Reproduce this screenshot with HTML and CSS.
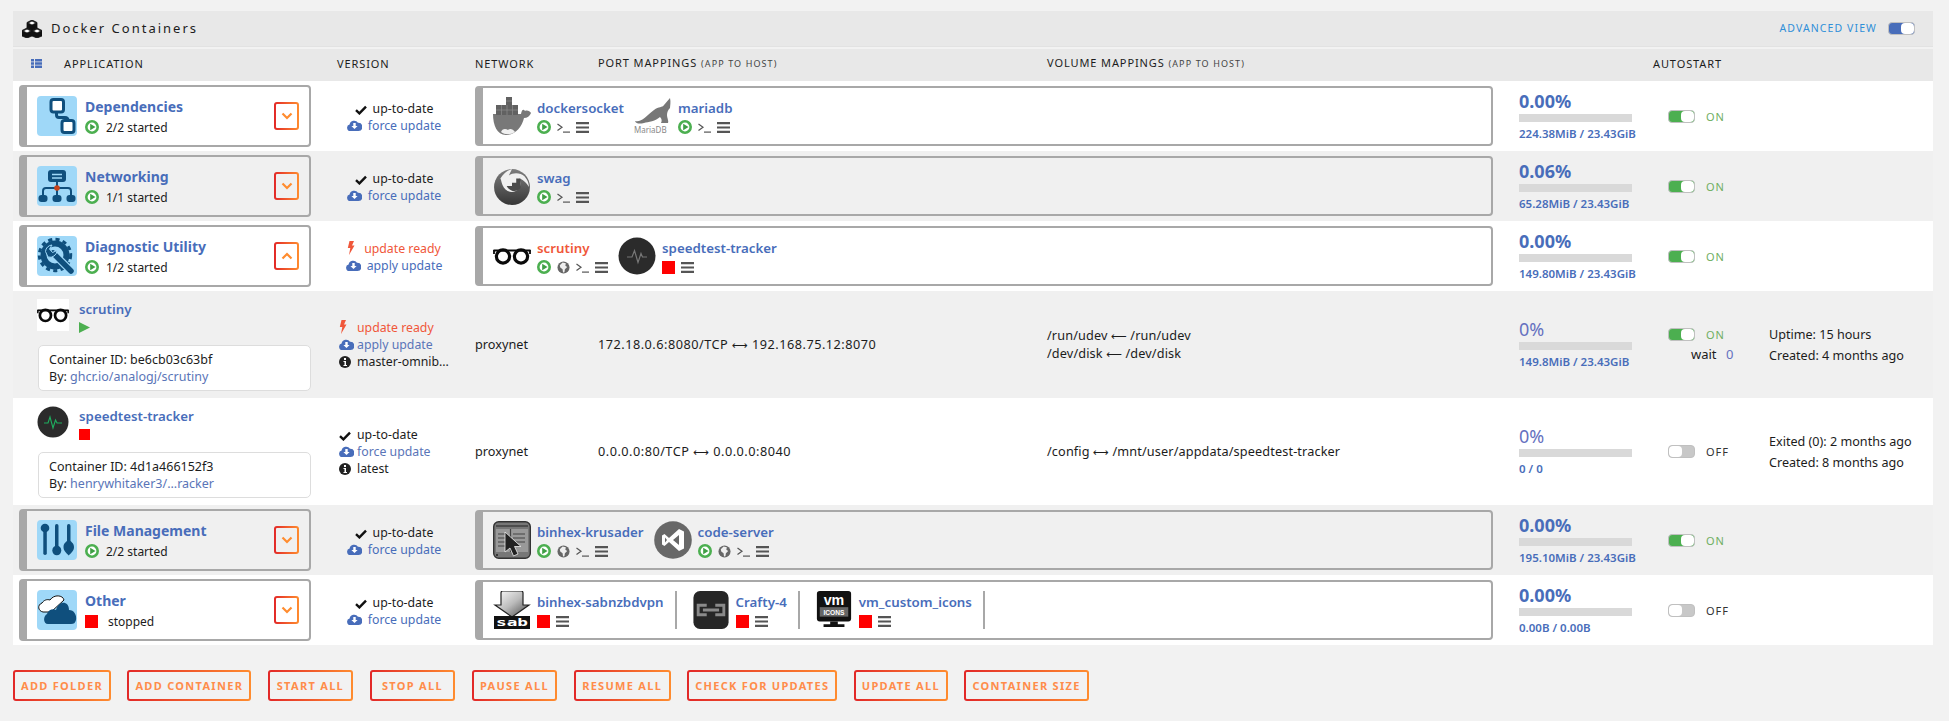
FILE: index.html
```html
<!DOCTYPE html>
<html lang="en">
<head>
<meta charset="utf-8">
<title>Docker Containers</title>
<link rel="stylesheet" href="styles.css">
</head>
<body>
<svg class="defs" width="0" height="0" aria-hidden="true">
  <symbol id="i-play" viewBox="0 0 14 14"><circle cx="7" cy="7" r="5.700" fill="#fff" stroke="#4caf50" stroke-width="2.600"/><path d="M5.200 3.800 10.500 7 5.200 10.200Z" fill="#3f9f45"/></symbol>
  <symbol id="i-globe" viewBox="0 0 14 14"><circle cx="7" cy="7" r="6.500" fill="#666"/><path d="M6 1.500 9.500 2.500 9 5 11 6.500 8.500 9 8 12 6.500 12.500 6 9 3.500 7 3 4.500Z" fill="#eee"/></symbol>
  <symbol id="i-menu" viewBox="0 0 13 12"><path d="M0 .5h13v2.200H0zM0 4.900h13v2.200H0zM0 9.300h13v2.200H0z" fill="#555"/></symbol>
  <symbol id="i-term" viewBox="0 0 13 12"><path d="M.5 2.500 5 5.800.5 9" fill="none" stroke="#555" stroke-width="1.200"/><path d="M6 10h7v1.200H6z" fill="#555"/></symbol>
  <symbol id="i-check" viewBox="0 0 12 10"><path d="M1 5.200 4.400 8.400 11 1.600" fill="none" stroke="#111" stroke-width="2.400"/></symbol>
  <symbol id="i-cloud" viewBox="0 0 15 13"><path d="M3.500 12A3.300 3.300 0 0 1 2.600 5.500 4.600 4.600 0 0 1 11 3.800 4.100 4.100 0 0 1 11.500 12Z" fill="#486dba"/><path d="M6.300 4h2.400v3h1.900L7.500 10 4.400 7h1.900Z" fill="#fff"/></symbol>
  <symbol id="i-bolt" viewBox="0 0 8 14"><path d="M2.500 0H7L5 4.500H7.500L2 14 3.300 7H.8Z" fill="#f0573a"/></symbol>
  <symbol id="i-info" viewBox="0 0 12 12"><circle cx="6" cy="6" r="6" fill="#222"/><path d="M5 2h2v2H5zM4.500 5h2.500v4H8v1H4.500V9h1V6h-1z" fill="#fff"/></symbol>
  <symbol id="i-docker" viewBox="0 0 38 38"><path d="M0 17H28C28.500 14 30 11 32 14 34 13 37 14 38 16 37 19 34 21 31 21 29 30 22 38 13 38 4 38 0 28 0 17Z" fill="#787878"/><path d="M3 8h22v10H3ZM13 0h6v8h-6Z" fill="#616161"/><path d="M3 13h22M8.500 8v10M14 8v10M19.500 8v10M13 4h6" stroke="#8c8c8c" stroke-width=".7" fill="none"/><path d="M8 35C10 31 13 32 15 33 17 31 20 32 22 35 17 38 12 38 8 35Z" fill="#f0f0f0"/></symbol>
  <symbol id="i-swag" viewBox="0 0 36 36"><defs><linearGradient id="g-swag" x1="0" y1="0" x2="0" y2="1"><stop offset="0" stop-color="#7d7d7d"/><stop offset="1" stop-color="#363636"/></linearGradient></defs><circle cx="18" cy="19" r="17" fill="url(#g-swag)"/><path d="M7 11C10 6 14 3 18 2L15 8C19 5 26 5 30 9 33 13 34 15 34 19 31 14 28 12 25 11 27 16 26 21 21 23 16 25 11 22 9 17 8 15 8 13 7 11Z" fill="#f0f0f0"/><path d="M13 18h5v-3h4v-4h4v9c-3 4-10 4-13-2Z" fill="#4a4a4a"/></symbol>
  <symbol id="i-glasses" viewBox="0 0 38 38"><g fill="none" stroke="#0a0a0a"><circle cx="10" cy="19.500" r="6.600" stroke-width="3.200"/><circle cx="28" cy="19.500" r="6.600" stroke-width="3.200"/><path d="M.5 13.500H37.500" stroke-width="2.200"/><path d="M1 13v4M37 13v4" stroke-width="1.800"/></g></symbol>
  <symbol id="i-speed-grey" viewBox="0 0 38 38"><circle cx="19" cy="19" r="18.500" fill="#2b2b2b"/><path d="M9 20h5l2.500-6.500 3.500 12 3-9 1.500 3.500H29" fill="none" stroke="#777" stroke-width="1.200"/></symbol>
  <symbol id="i-speed-green" viewBox="0 0 32 32"><circle cx="16" cy="16" r="15.500" fill="#2b2b2b"/><path d="M7 17h4l2-6 3 11 2.500-8 1.500 3h5" fill="none" stroke="#1fae5f" stroke-width="1.100"/></symbol>
  <symbol id="i-krusader" viewBox="0 0 38 38"><rect x=".7" y=".7" width="36.600" height="36.600" rx="5" fill="#777" stroke="#333" stroke-width="1.400"/><path d="M3 5h32" stroke="#333" stroke-width="1.200"/><rect x="3" y="8" width="32" height="23" fill="#999"/><path d="M17.500 8v23M5 13h9M5 17h9M5 21h9M5 25h9M20 13h12M20 17h12M20 21h12" stroke="#444" stroke-width="1.200"/><path d="M3 34h2" stroke="#222" stroke-width="1.500"/><path d="M12 11V31L17 27 20.500 35 25 33 21.500 25.500H28Z" fill="#222" stroke="#eee" stroke-width=".8"/></symbol>
  <symbol id="i-vscode" viewBox="0 0 38 38"><circle cx="19" cy="19" r="18.800" fill="#686868"/><path d="M25 8 15 17 10.500 13 8 14.500V23.500L10.500 25 15 21 25 30 30 27.500V10.500ZM11 16.500 13 19 11 21.500ZM25 14V24L19 19Z" fill="#fff"/></symbol>
  <symbol id="i-crafty" viewBox="0 0 37 40"><rect width="37" height="40" rx="7" fill="#262626"/><path d="M14 15H5v10h9M23 15h9v10h-9M10 20h17" fill="none" stroke="#8a8a8a" stroke-width="3"/></symbol>
  <symbol id="f-flow" viewBox="0 0 40 40"><rect width="40" height="40" rx="4" fill="#9fd8f8"/><path d="M19.500 16v3q0 2.500 2.500 2.500h6q3 0 3 3" fill="none" stroke="#0f4f7d" stroke-width="3"/><rect x="14" y="3.500" width="12.500" height="12.500" rx="2.500" fill="#fff" stroke="#0f4f7d" stroke-width="3"/><rect x="25" y="24.500" width="12" height="12" rx="2.500" fill="#fff" stroke="#0f4f7d" stroke-width="3"/></symbol>
  <symbol id="f-net" viewBox="0 0 40 40"><rect width="40" height="40" rx="4" fill="#9fd8f8"/><rect x="11" y="4" width="18" height="12" rx="3" fill="#0f4f7d"/><path d="M15 8.500h10M15 12h10" stroke="#9fd8f8" stroke-width="1.500"/><path d="M20 16v14M6 30v-5q0-3 3-3h22q3 0 3 3v5" fill="none" stroke="#0f4f7d" stroke-width="2"/><circle cx="20" cy="22" r="2.800" fill="#c9431b"/><rect x="1.500" y="29" width="9" height="7" rx="3" fill="#0f4f7d"/><rect x="15.500" y="29" width="9" height="7" rx="3" fill="#0f4f7d"/><rect x="29.500" y="29" width="9" height="7" rx="3" fill="#0f4f7d"/></symbol>
  <symbol id="f-gear" viewBox="0 0 40 40"><rect width="40" height="40" rx="4" fill="#9fd8f8"/><circle cx="18" cy="19" r="15.700" fill="none" stroke="#0f4f7d" stroke-width="3" stroke-dasharray="4.100 3.300"/><circle cx="18" cy="19" r="11.500" fill="none" stroke="#0f4f7d" stroke-width="6"/><path d="M16 17 34 35" stroke="#9fd8f8" stroke-width="8"/><path d="M16 17 34 35" stroke="#0f4f7d" stroke-width="5.500" stroke-linecap="round"/><path d="M8.500 15.500A7 7 0 0 1 15 9L12.500 13 15.500 16.500 20 14.500A7 7 0 0 1 11 21Z" fill="#0f4f7d" stroke="#9fd8f8"/></symbol>
  <symbol id="f-tools" viewBox="0 0 40 40"><rect width="40" height="40" rx="4" fill="#9fd8f8"/><g fill="#0f4f7d"><circle cx="8" cy="8" r="4.300"/><rect x="6.300" y="8" width="3.500" height="27" rx="1.700"/><rect x="18" y="4" width="3.500" height="26" rx="1.700"/><ellipse cx="19.800" cy="30.500" rx="4.500" ry="4.800"/><rect x="30" y="4" width="3.500" height="22" rx="1.700"/><path d="M26.500 27C26.500 23 30 21 31.700 20 33.500 21 37 23 37 27 37 31 34 33 31.700 35.500 29.500 33 26.500 31 26.500 27Z"/></g></symbol>
  <symbol id="f-cloud" viewBox="0 0 40 40"><rect width="40" height="40" rx="4" fill="#9fd8f8"/><path d="M6 22C1 21 0 15 5 13 7 10 10 9 13 10 17 4 26 5 27 10L14 22Z" fill="#fff" stroke="#111" stroke-width="1"/><path d="M11 34C6 34 6 26 10 24 11 20 16 18 19 20 22 10 32 11 32 20 37 20 40 25 39 30 38 33 37 34 34 34Z" fill="#0f4f7d"/></symbol>
  <symbol id="i-down" viewBox="0 0 12 8"><path d="M1.500 1.500 6 6l4.500-4.500" fill="none" stroke="#ff8c2f" stroke-width="2.200"/></symbol>
  <symbol id="i-up" viewBox="0 0 12 8"><path d="M1.500 6.500 6 2l4.500 4.500" fill="none" stroke="#ff8c2f" stroke-width="2.200"/></symbol>
</svg>

<main class="panel">
  <header class="titlebar">
    <svg class="title-icon" viewBox="0 0 20 18" width="20" height="18"><g stroke="#111" stroke-width=".8"><path d="M10 0 15 2.500V8L10 10.500 5 8V2.500Z" fill="#111"/><path d="M5 8 10 10.500V16L5 18 0 16V10.500Z" fill="#111"/><path d="M15 8 20 10.500V16L15 18 10 16V10.500Z" fill="#111"/><path d="M10 1 14 3 10 5 6 3ZM5 9 9 11 5 13 1 11ZM15 9 19 11 15 13 11 11Z" fill="#fff"/></g></svg>
    <h1 class="title">Docker Containers</h1>
    <span class="spacer"></span>
    <span class="adv-label">ADVANCED VIEW</span>
    <span class="toggle toggle-blue"><i></i></span>
  </header>

  <div class="row head-row">
    <div class="col-app head-app">
      <svg class="list-icon" viewBox="0 0 11 9" width="11" height="9"><path d="M0 0h3v2.500H0zM4 0h7v2.500H4zM0 3.250h3v2.500H0zM4 3.250h7v2.500H4zM0 6.500h3V9H0zM4 6.500h7V9H4z" fill="#486dba"/></svg>
      <span>APPLICATION</span>
    </div>
    <div class="head-version">VERSION</div>
    <div>NETWORK</div>
    <div>PORT MAPPINGS <small>(APP TO HOST)</small></div>
    <div>VOLUME MAPPINGS <small>(APP TO HOST)</small></div>
    <div class="head-auto">AUTOSTART</div>
  </div>

  <section class="row group white">
    <div class="app-box">
      <svg class="folder-icon"><use href="#f-flow"/></svg>
      <div class="app-text"><a class="app-name">Dependencies</a><div class="app-status"><svg class="ic14"><use href="#i-play"/></svg><span>2/2 started</span></div></div>
      <button class="chev" aria-label="expand"><svg class="chev-ic"><use href="#i-down"/></svg></button>
    </div>
    <div class="ver-c"><div><svg class="ic-check"><use href="#i-check"/></svg>up-to-date</div><div class="blue"><svg class="ic-cloud"><use href="#i-cloud"/></svg>force update</div></div>
    <div class="net-box">
      <div class="item"><svg class="item-icon"><use href="#i-docker"/></svg><div><a class="item-name">dockersocket</a><div class="ctrls"><svg class="ic14"><use href="#i-play"/></svg><svg class="ic13"><use href="#i-term"/></svg><svg class="ic13"><use href="#i-menu"/></svg></div></div></div>
      <div class="item"><svg class="item-icon" viewBox="0 0 38 38"><path d="M1 24C7 26 12 19 20 13 25 9 28 11 30 8L36 1C37 5 36 9 36 11 34 13 33 15 33 18 33 21 35 24 34 26H27C28 24 28 22 26 20 22 24 14 25 10 26 6 27 2 27 1 24Z" fill="#777"/><text class="maria-text" x="0" y="35.500">MariaDB</text></svg><div><a class="item-name">mariadb</a><div class="ctrls"><svg class="ic14"><use href="#i-play"/></svg><svg class="ic13"><use href="#i-term"/></svg><svg class="ic13"><use href="#i-menu"/></svg></div></div></div>
    </div>
    <div class="cpu"><div class="pct">0.00%</div><div class="bar"></div><div class="mem">224.38MiB / 23.43GiB</div></div>
    <div class="auto"><span class="toggle toggle-green"><i></i></span><span class="on">ON</span></div>
  </section>

  <section class="row group grey">
    <div class="app-box">
      <svg class="folder-icon"><use href="#f-net"/></svg>
      <div class="app-text"><a class="app-name">Networking</a><div class="app-status"><svg class="ic14"><use href="#i-play"/></svg><span>1/1 started</span></div></div>
      <button class="chev" aria-label="expand"><svg class="chev-ic"><use href="#i-down"/></svg></button>
    </div>
    <div class="ver-c"><div><svg class="ic-check"><use href="#i-check"/></svg>up-to-date</div><div class="blue"><svg class="ic-cloud"><use href="#i-cloud"/></svg>force update</div></div>
    <div class="net-box">
      <div class="item"><svg class="item-icon"><use href="#i-swag"/></svg><div><a class="item-name">swag</a><div class="ctrls"><svg class="ic14"><use href="#i-play"/></svg><svg class="ic13"><use href="#i-term"/></svg><svg class="ic13"><use href="#i-menu"/></svg></div></div></div>
    </div>
    <div class="cpu"><div class="pct">0.06%</div><div class="bar"></div><div class="mem">65.28MiB / 23.43GiB</div></div>
    <div class="auto"><span class="toggle toggle-green"><i></i></span><span class="on">ON</span></div>
  </section>

  <section class="row group white">
    <div class="app-box">
      <svg class="folder-icon"><use href="#f-gear"/></svg>
      <div class="app-text"><a class="app-name">Diagnostic Utility</a><div class="app-status"><svg class="ic14"><use href="#i-play"/></svg><span>1/2 started</span></div></div>
      <button class="chev" aria-label="collapse"><svg class="chev-ic"><use href="#i-up"/></svg></button>
    </div>
    <div class="ver-c"><div class="orange"><svg class="ic-bolt"><use href="#i-bolt"/></svg>update ready</div><div class="blue"><svg class="ic-cloud"><use href="#i-cloud"/></svg>apply update</div></div>
    <div class="net-box">
      <div class="item"><svg class="item-icon"><use href="#i-glasses"/></svg><div><a class="item-name orange">scrutiny</a><div class="ctrls"><svg class="ic14"><use href="#i-play"/></svg><svg class="ic13"><use href="#i-globe"/></svg><svg class="ic13"><use href="#i-term"/></svg><svg class="ic13"><use href="#i-menu"/></svg></div></div></div>
      <div class="item"><svg class="item-icon"><use href="#i-speed-grey"/></svg><div><a class="item-name">speedtest-tracker</a><div class="ctrls"><span class="stop"></span><svg class="ic13"><use href="#i-menu"/></svg></div></div></div>
    </div>
    <div class="cpu"><div class="pct">0.00%</div><div class="bar"></div><div class="mem">149.80MiB / 23.43GiB</div></div>
    <div class="auto"><span class="toggle toggle-green"><i></i></span><span class="on">ON</span></div>
  </section>

  <section class="row detail grey">
    <div class="d-app">
      <div class="d-top"><svg class="d-icon d-white"><use href="#i-glasses"/></svg><div><a class="item-name">scrutiny</a><svg class="d-state" viewBox="0 0 11 11"><path d="M0 0 11 5.500 0 11Z" fill="#4caf50"/></svg></div></div>
      <div class="info">Container ID: be6cb03c63bf<br>By: <a class="blue-l">ghcr.io/analogj/scrutiny</a></div>
    </div>
    <div class="ver-l"><div class="orange"><span class="vic"><svg class="ic-bolt"><use href="#i-bolt"/></svg></span>update ready</div><div class="blue-l"><span class="vic"><svg class="ic-cloud"><use href="#i-cloud"/></svg></span>apply update</div><div><span class="vic"><svg class="ic-info"><use href="#i-info"/></svg></span>master-omnib...</div></div>
    <div class="cell">proxynet</div>
    <div class="cell ports">172.18.0.6:8080/TCP <span class="arrow">⟷</span> 192.168.75.12:8070</div>
    <div class="cell vols"><div>/run/udev <span class="arrow">⟵</span> /run/udev</div><div>/dev/disk <span class="arrow">⟵</span> /dev/disk</div></div>
    <div class="cpu"><div class="pct-thin">0%</div><div class="bar"></div><div class="mem">149.8MiB / 23.43GiB</div></div>
    <div class="auto-col"><div class="auto"><span class="toggle toggle-green"><i></i></span><span class="on">ON</span></div><div class="wait">wait <b>0</b></div></div>
    <div class="meta">Uptime: 15 hours<br>Created: 4 months ago</div>
  </section>

  <section class="row detail white">
    <div class="d-app">
      <div class="d-top"><svg class="d-icon"><use href="#i-speed-green"/></svg><div><a class="item-name">speedtest-tracker</a><span class="d-stop"></span></div></div>
      <div class="info">Container ID: 4d1a466152f3<br>By: <a class="blue-l">henrywhitaker3/...racker</a></div>
    </div>
    <div class="ver-l"><div><span class="vic"><svg class="ic-check"><use href="#i-check"/></svg></span>up-to-date</div><div class="blue-l"><span class="vic"><svg class="ic-cloud"><use href="#i-cloud"/></svg></span>force update</div><div><span class="vic"><svg class="ic-info"><use href="#i-info"/></svg></span>latest</div></div>
    <div class="cell">proxynet</div>
    <div class="cell ports">0.0.0.0:80/TCP <span class="arrow">⟷</span> 0.0.0.0:8040</div>
    <div class="cell vols">/config <span class="arrow">⟷</span> /mnt/user/appdata/speedtest-tracker</div>
    <div class="cpu"><div class="pct-thin">0%</div><div class="bar"></div><div class="mem">0 / 0</div></div>
    <div class="auto"><span class="toggle toggle-off"><i></i></span><span class="off">OFF</span></div>
    <div class="meta">Exited (0): 2 months ago<br>Created: 8 months ago</div>
  </section>

  <section class="row group grey">
    <div class="app-box">
      <svg class="folder-icon"><use href="#f-tools"/></svg>
      <div class="app-text"><a class="app-name">File Management</a><div class="app-status"><svg class="ic14"><use href="#i-play"/></svg><span>2/2 started</span></div></div>
      <button class="chev" aria-label="expand"><svg class="chev-ic"><use href="#i-down"/></svg></button>
    </div>
    <div class="ver-c"><div><svg class="ic-check"><use href="#i-check"/></svg>up-to-date</div><div class="blue"><svg class="ic-cloud"><use href="#i-cloud"/></svg>force update</div></div>
    <div class="net-box">
      <div class="item"><svg class="item-icon"><use href="#i-krusader"/></svg><div><a class="item-name">binhex-krusader</a><div class="ctrls"><svg class="ic14"><use href="#i-play"/></svg><svg class="ic13"><use href="#i-globe"/></svg><svg class="ic13"><use href="#i-term"/></svg><svg class="ic13"><use href="#i-menu"/></svg></div></div></div>
      <div class="item"><svg class="item-icon"><use href="#i-vscode"/></svg><div><a class="item-name">code-server</a><div class="ctrls"><svg class="ic14"><use href="#i-play"/></svg><svg class="ic13"><use href="#i-globe"/></svg><svg class="ic13"><use href="#i-term"/></svg><svg class="ic13"><use href="#i-menu"/></svg></div></div></div>
    </div>
    <div class="cpu"><div class="pct">0.00%</div><div class="bar"></div><div class="mem">195.10MiB / 23.43GiB</div></div>
    <div class="auto"><span class="toggle toggle-green"><i></i></span><span class="on">ON</span></div>
  </section>

  <section class="row group white">
    <div class="app-box">
      <svg class="folder-icon"><use href="#f-cloud"/></svg>
      <div class="app-text"><a class="app-name">Other</a><div class="app-status"><span class="stop"></span><span class="stopped">stopped</span></div></div>
      <button class="chev" aria-label="expand"><svg class="chev-ic"><use href="#i-down"/></svg></button>
    </div>
    <div class="ver-c"><div><svg class="ic-check"><use href="#i-check"/></svg>up-to-date</div><div class="blue"><svg class="ic-cloud"><use href="#i-cloud"/></svg>force update</div></div>
    <div class="net-box">
      <div class="item sep"><svg class="item-icon" viewBox="0 0 38 38"><defs><linearGradient id="g-sab" x1="0" y1="0" x2="1" y2="1"><stop offset="0" stop-color="#fff"/><stop offset=".5" stop-color="#bbb"/><stop offset="1" stop-color="#444"/></linearGradient></defs><path d="M8 2Q8 0 10 0H28Q30 0 30 2V14H36L19 26 2 14H8Z" fill="url(#g-sab)" stroke="#222" stroke-width="1.200"/><rect x="1" y="25" width="36" height="13" fill="#111"/><text class="sab-text" x="19" y="34.500" textLength="32" lengthAdjust="spacingAndGlyphs">sab</text></svg><div><a class="item-name">binhex-sabnzbdvpn</a><div class="ctrls"><span class="stop"></span><svg class="ic13"><use href="#i-menu"/></svg></div></div></div>
      <div class="item sep"><svg class="item-icon"><use href="#i-crafty"/></svg><div><a class="item-name">Crafty-4</a><div class="ctrls"><span class="stop"></span><svg class="ic13"><use href="#i-menu"/></svg></div></div></div>
      <div class="item sep"><svg class="item-icon" viewBox="0 0 36 40"><path d="M3 0H33Q36 0 36 3V29Q36 32 33 32H3Q0 32 0 29V3Q0 0 3 0Z" fill="#111"/><path d="M14 32h8v3h7v3H7v-3h7Z" fill="#111"/><text class="vm-text" x="18" y="15">vm</text><rect x="3" y="17" width="30" height="10" fill="#666"/><text class="vm-sub" x="18" y="25">ICONS</text></svg><div><a class="item-name">vm_custom_icons</a><div class="ctrls"><span class="stop"></span><svg class="ic13"><use href="#i-menu"/></svg></div></div></div>
    </div>
    <div class="cpu"><div class="pct">0.00%</div><div class="bar"></div><div class="mem">0.00B / 0.00B</div></div>
    <div class="auto"><span class="toggle toggle-off"><i></i></span><span class="off">OFF</span></div>
  </section>
</main>

<nav class="actions">
  <button class="act">ADD FOLDER</button>
  <button class="act">ADD CONTAINER</button>
  <button class="act act-short">START ALL</button>
  <button class="act act-short">STOP ALL</button>
  <button class="act act-short">PAUSE ALL</button>
  <button class="act act-wide">RESUME ALL</button>
  <button class="act">CHECK FOR UPDATES</button>
  <button class="act">UPDATE ALL</button>
  <button class="act">CONTAINER SIZE</button>
</nav>
</body>
</html>
```
FILE: styles.css
```css
* { box-sizing: border-box; }
html, body { margin: 0; height: 100%; }
body {
  background: #f2f2f2;
  color: #1c1c1c;
  font: 13px/17px "Noto Sans", "Liberation Sans", sans-serif;
  padding: 11px 16px 0 13px;
  overflow: hidden;
}
.defs { position: absolute; }
a { color: inherit; text-decoration: none; }

.panel { width: 1920px; }
.titlebar {
  height: 36px;
  background: #e8e8e8;
  display: flex;
  align-items: center;
  padding: 0 18px 0 9px;
  margin-bottom: 2px;
  border-bottom: 1px solid #e2e2e2;
}
.title-icon { margin-right: 9px; }
.title {
  margin: 0;
  font: 400 13px/17px "Noto Sans", sans-serif;
  letter-spacing: 2px;
}
.spacer { flex: 1; }
.adv-label { font-size: 10.500px; letter-spacing: 1.100px; color: #2f8fd8; margin-right: 11px; }

.row {
  display: grid;
  grid-template-columns: 300px 162px 123px 449px 472px 149px 101px 164px;
  align-items: center;
}
.head-row {
  height: 32px;
  background: #e8e8e8;
  font-size: 11px;
  line-height: 14px;
  letter-spacing: .9px;
  padding-bottom: 3px;
}
.head-row small { font-size: 9px; letter-spacing: 1.100px; color: #444; }
.head-app { display: flex; align-items: center; padding-left: 18px; }
.list-icon { margin-right: 22px; }
.head-version { padding-left: 24px; }
.head-auto { grid-column: 6 / 8; padding-left: 134px; }

.group { height: 70px; }
.detail { height: 107px; }
.white { background: #fff; }
.grey { background: #f0f0f0; }

.app-box {
  margin-left: 6px;
  width: 292px;
  height: 62px;
  border: 2px solid #a8a8a8;
  border-left-width: 8px;
  border-radius: 4px;
  display: flex;
  align-items: center;
  padding-left: 10px;
}
.folder-icon { width: 40px; height: 40px; flex: none; margin-right: 8px; }
.app-text { flex: 1; }
.app-name { display: block; font-weight: 700; font-size: 14px; line-height: 20px; color: #486dba; }
.app-status { display: flex; align-items: center; height: 16px; margin-top: 2px; font-size: 12px; }
.app-status .ic14 { margin-right: 7px; }
.stopped { margin-left: 10px; }
.ic14 { width: 14px; height: 14px; flex: none; }
.ic13 { width: 13px; height: 13px; flex: none; }
.chev {
  width: 25px;
  height: 28px;
  margin-right: 10px;
  padding: 0;
  border: 2px solid transparent;
  border-radius: 3px;
  background: linear-gradient(#fff, #fff) padding-box, linear-gradient(90deg, #e22828, #ff8c2f) border-box;
  display: flex;
  align-items: center;
  justify-content: center;
}
.grey .chev { background: linear-gradient(#f0f0f0, #f0f0f0) padding-box, linear-gradient(90deg, #e22828, #ff8c2f) border-box; }
.chev-ic { width: 12px; height: 8px; }

.ver-c { text-align: center; font-size: 12.300px; line-height: 17px; padding-top: 2px; }
.ver-c svg { vertical-align: -2px; margin-right: 6px; }
.ver-c .ic-bolt { margin-right: 9px; }
.ic-check { width: 12px; height: 10px; }
.ic-cloud { width: 15px; height: 13px; }
.ic-bolt { width: 8px; height: 14px; }
.ic-info { width: 12px; height: 12px; }
.vic { display: inline-block; width: 18px; }
.vic svg { display: inline-block; vertical-align: -2px; }
.blue { color: #486dba; }
.blue-l { color: #5a75b8; }
.orange { color: #f0573a; }

.net-box {
  grid-column: 3 / 6;
  width: 1018px;
  height: 60px;
  border: 2px solid #a8a8a8;
  border-left-width: 8px;
  border-radius: 4px;
  display: flex;
  align-items: center;
  padding-left: 10px;
  gap: 10px;
}
.item { display: flex; align-items: center; }
.item-icon { width: 38px; height: 38px; flex: none; margin-right: 6px; }
.item-name { display: block; font-weight: 600; font-size: 13.300px; line-height: 20px; color: #486dba; }
.item-name.orange { color: #f0573a; }
.ctrls { display: flex; align-items: center; gap: 6px; height: 14px; margin-top: 2px; }
.stop { display: block; width: 13px; height: 13px; background: #f00; flex: none; }
.sep { padding-right: 11px; border-right: 2px solid #a8a8a8; height: 38px; margin-right: 5px; }

.maria-text { font: 8px "Noto Sans", sans-serif; fill: #888; }
.sab-text { font: 700 11px/1 "DejaVu Sans Mono", monospace; fill: #fff; text-anchor: middle; }
.vm-text { font: 700 15px/1 "Liberation Sans", sans-serif; fill: #fff; text-anchor: middle; }
.vm-sub { font: 700 7px/1 "Liberation Sans", sans-serif; fill: #fff; text-anchor: middle; }

.cpu { grid-column: 6; }
.pct { font-weight: 700; font-size: 18px; line-height: 20px; color: #486dba; }
.pct-thin { font-size: 18px; line-height: 20px; color: #6571c0; }
.bar { width: 113px; height: 8px; background: #d9d9d9; margin: 3px 0 4px; }
.mem { font-weight: 600; font-size: 11.500px; line-height: 16px; color: #486dba; }

.auto { display: flex; align-items: center; gap: 11px; font-size: 11px; letter-spacing: 1px; }
.on { color: #6fae5f; }
.off { color: #333; }
.wait { padding-left: 23px; margin-top: 3px; }
.wait b { font-weight: 400; color: #6571c0; margin-left: 6px; }

.toggle {
  display: inline-flex;
  width: 27px;
  height: 13px;
  border-radius: 4px;
  border: 1px solid #c0c0c0;
  overflow: hidden;
  flex: none;
}
.toggle i { display: block; width: 13px; height: 100%; background: #fff; border-radius: 4px; }
.toggle-green { background: #4caf50; justify-content: flex-end; }
.toggle-blue { background: #486dba; justify-content: flex-end; }
.toggle-off { background: #c8c8c8; }

.d-app { padding-left: 24px; }
.d-top { display: flex; gap: 10px; height: 44px; margin-bottom: 2px; }
.d-icon { width: 32px; height: 32px; flex: none; }
.d-white { background: #fff; }
.d-state { display: block; width: 11px; height: 11px; margin-top: 3px; }
.d-stop { display: block; width: 11px; height: 11px; margin-top: 3px; background: #f00; }
.info {
  width: 273px;
  height: 46px;
  margin-left: 1px;
  background: #fff;
  border: 1px solid #ddd;
  border-radius: 5px;
  padding: 5px 10px;
  font-size: 12.500px;
}
.ver-l { padding-left: 26px; font-size: 12.300px; line-height: 17px; white-space: nowrap; }
.cell { font-size: 12.700px; white-space: nowrap; }
.ports { letter-spacing: .5px; }
.vols { line-height: 17px; letter-spacing: .13px; }
.arrow { font-family: "DejaVu Sans", sans-serif; font-size: 11px; }
.meta { font-size: 12.600px; line-height: 21px; }

.actions { display: flex; gap: 16.500px; margin-top: 25px; }
.act {
  height: 31px;
  padding: 0 6px;
  border: 2px solid transparent;
  border-radius: 3px;
  background: linear-gradient(#f2f2f2, #f2f2f2) padding-box, linear-gradient(90deg, #e22828, #ff8c2f) border-box;
  color: #ff8c4a;
  font: 700 11px/17px "Noto Sans", sans-serif;
  letter-spacing: 1.300px;
}
.act-short { min-width: 85.500px; }
.act-wide { min-width: 97px; }
```
